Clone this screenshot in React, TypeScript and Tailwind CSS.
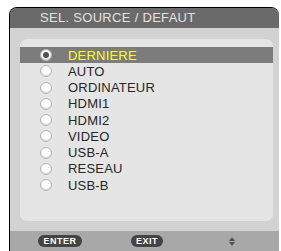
const SOURCES = ['DERNIERE', 'AUTO', 'ORDINATEUR', 'HDMI1', 'HDMI2', 'VIDEO', 'USB-A', 'RESEAU', 'USB-B'];

function Radio({ checked }: { checked: boolean }) {
  return (
    <span className="flex h-[12px] w-[12px] items-center justify-center rounded-full border border-[#b4b4b4] bg-white shadow-[inset_0_-1px_1px_#d4d4d4]">
      {checked && <span className="h-[6px] w-[6px] rounded-full bg-[#505050]" />}
    </span>
  );
}

function Pill({ label, width }: { label: string; width: string }) {
  return (
    <span
      className={`flex h-[12px] ${width} items-center justify-center rounded-full bg-[#444] text-[9px] font-bold leading-none tracking-[0.5px] text-white`}
    >
      {label}
    </span>
  );
}

export default function App() {
  return (
    <div className="h-[251px] w-[281px] bg-white pl-[9px] pt-[7px] font-['Liberation_Sans',Arial,sans-serif]">
      <div className="flex h-[244px] w-[270px] flex-col overflow-hidden rounded-t-[8px] border-l border-t border-black bg-[#d2d2d2]">
        {/* Title */}
        <div className="flex h-[20px] shrink-0 items-center bg-[#6a6a6a] pl-[30px] text-[13px] tracking-[0.3px] text-[#e2e2e2]">
          SEL. SOURCE / DEFAUT
        </div>

        {/* List panel */}
        <div className="flex-1 pl-[10px] pr-[6px] pt-[11px]">
          <div className="h-[182px] rounded-[7px] bg-[#e5e5e5] pt-[8px]">
            {SOURCES.map((name, i) => {
              const active = i === 0;
              return (
                <div
                  key={name}
                  className={`flex h-[16.25px] items-center text-[13px] leading-none ${
                    active ? 'bg-[#7c7c7c] text-[#ffff1a]' : 'text-[#262626]'
                  }`}
                >
                  <span className="ml-[20px] mr-[16px] flex">
                    <Radio checked={active} />
                  </span>
                  <span className="tracking-[0.2px]">{name}</span>
                </div>
              );
            })}
          </div>
        </div>

        {/* Footer */}
        <div className="mt-[10px] flex h-[20px] shrink-0 items-center bg-[#a8a8a8] pl-[28px]">
          <Pill label="ENTER" width="w-[44px]" />
          <span className="ml-[49px]">
            <Pill label="EXIT" width="w-[32px]" />
          </span>
          <span className="ml-[66px] flex flex-col items-center gap-[1px]">
            <span className="h-0 w-0 border-x-[3px] border-b-[4px] border-x-transparent border-b-[#555]" />
            <span className="h-0 w-0 border-x-[3px] border-t-[4px] border-x-transparent border-t-[#555]" />
          </span>
        </div>
      </div>
    </div>
  );
}
